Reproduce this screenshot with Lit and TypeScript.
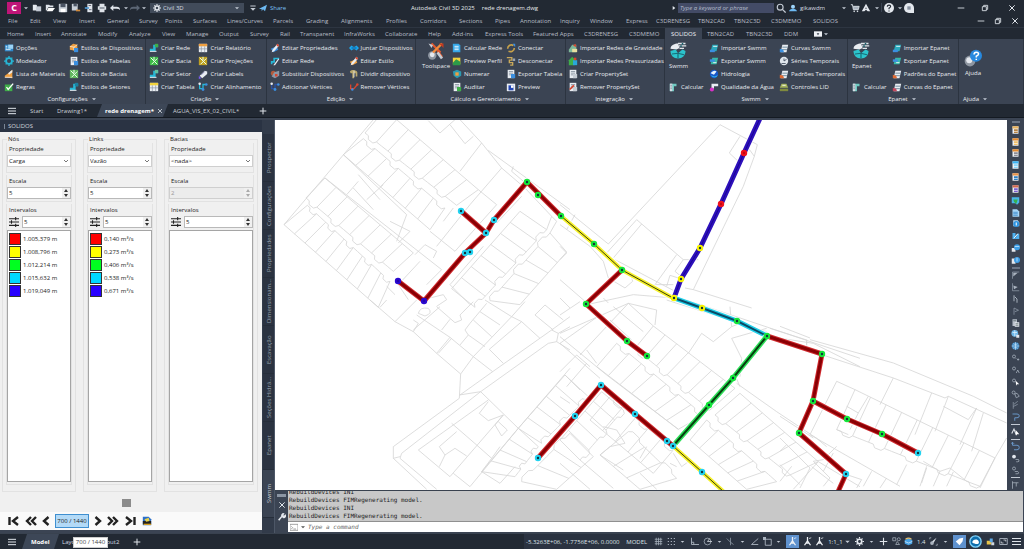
import { LitElement, html, css, svg, nothing, TemplateResult } from "lit";
import { customElement } from "lit/decorators.js";
import { classMap } from "lit/directives/class-map.js";

type Pt = [number, number];

/* ---------- icons, drawn on a 12 unit grid ---------- */
const C = { cy: "#27b7d6", or: "#f0a040", gr: "#3fae49", rd: "#d8452e", bl: "#3b8fe0", wh: "#e9edf2", ye: "#f2d33c", gy: "#9aa4b1" };

const doc = (accent: string) => svg`<path d="M2 1h8v10H2z" fill=${C.wh}/><path d="M3.5 3h5M3.5 5h5M3.5 7h5" stroke="#7b8796" stroke-width=".9"/><path d="M6 6h5v5H6z" fill=${accent}/>`;
const stack = (accent: string) => svg`<path d="M1 4l4-3 5 1v5L6 9 1 8z" fill=${C.or}/><path d="M1 4l5 1 4-3M6 5v4" stroke="#fff" stroke-width=".8" fill="none"/><path d="M6 6h5v5H6z" fill=${accent}/>`;
const pipe = (accent: string) => svg`<path d="M1 10V7h4V2h6v3H8v5z" fill=${C.cy}/><path d="M7 1h4v4H7z" fill=${accent}/><path d="M1 10h8" stroke=${C.wh} stroke-width="1.2"/>`;
const map = (accent: string) => svg`<path d="M1 1h10v10H1z" fill=${accent}/><path d="M2 2l8 8M10 3L3 10M6 1v4" stroke="#eaffea" stroke-width="1.2"/>`;
const table = (accent: string) => svg`<path d="M1 1h10v10H1z" fill=${C.wh}/><path d="M1 1h10v3H1z" fill=${accent}/><path d="M4 4v7M8 4v7M1 7h10" stroke="#8a94a2" stroke-width=".8"/>`;
const pencil = (accent: string) => svg`<path d="M1 7l3 4 6-3-2-4z" fill=${accent}/><path d="M3 8l6-7 2 2-6 7-3 1z" fill=${C.wh}/><path d="M9 1l2 2-1.500 1.500-2-2z" fill=${C.rd}/>`;
const nodes = (accent: string) => svg`<path d="M2 2v6h4V3h4" fill="none" stroke=${accent} stroke-width="1.600"/><circle cx="2" cy="2" r="1.500" fill=${C.wh}/><circle cx="10" cy="3" r="1.500" fill=${C.bl}/><circle cx="6" cy="9" r="1.700" fill=${C.bl}/>`;
const curve = (accent: string) => svg`<path d="M2 11l2-9h7L9 11z" fill=${C.wh}/><path d="M4 5h6M3.500 8h6" stroke="#5b7d92"/><path d="M1 11V7l4 1 1 3z" fill=${accent}/>`;
const swirl = svg`<path d="M1 4.500C1 2 4 1 6 1l1 3-2 1z" fill=${C.wh}/><path d="M6 1h5M6.500 2.600h5M7 4.200h3" stroke="#dfe5ea" stroke-width=".9"/><path d="M9 .6v1.200M8 2.200v1.200" stroke="#17606b"/><path d="M1 6l3.500-1L6 7.500 9 5l2 1c0 3-2 5-5 5S1 9 1 6z" fill="#2cc3cb"/><path d="M2 8l4-.5L10 8.500M6 7.500V11" stroke="#176f7a" stroke-width=".8" fill="none"/>`;

const ICON: Record<string, TemplateResult> = {
  opcoes: svg`<path d="M1 2h10v8H1z" fill="#2d86c9"/><path d="M5 2h6v5H5z" fill="#9bd3f5"/><path d="M2 4h2M2 6h2M2 8h6" stroke="#fff"/>`,
  modelador: svg`<circle cx="6" cy="6" r="3.500" fill="none" stroke=${C.cy} stroke-width="2.200"/><path d="M6 0v2M6 10v2M0 6h2M10 6h2M2 2l1 1M9 9l1 1M10 2L9 3M2 10l1-1" stroke=${C.cy} stroke-width="1.500"/>`,
  lista: svg`<path d="M1 10V8l4-3 5-4v10z" fill=${C.or}/><path d="M5 5l5-4v3L6 7z" fill=${C.wh}/><path d="M1 10h9" stroke=${C.wh}/>`,
  regras: svg`<path d="M1 3h9v8H1z" fill=${C.gr}/><path d="M3 6l2 3 6-7" stroke="#fff" stroke-width="1.600" fill="none"/>`,
  estDisp: stack(C.bl), estTab: doc(C.bl), estBac: map("#62b85f"), estSet: pipe("#1c7fa0"),
  rede: pipe(C.gr), bacia: map("#3dbb46"), setor: pipe("#63c1a0"), tabela: table(C.ye),
  relat: table(C.or), proj: map("#c0a020"), labels: svg`<path d="M2 8l6-6 3 1 0 3-6 5z" fill=${C.wh}/><path d="M1 8l3 3-3 1z" fill="#7a5cf0"/><path d="M4 7l4-4" stroke="#77a"/>`, alinh: nodes(C.cy),
  edProp: pencil(C.bl), edRede: svg`<path d="M2 10V7h3V3h6" stroke=${C.cy} stroke-width="2" fill="none"/><path d="M4 11l6-8 1 1-5 7z" fill=${C.wh}/>`,
  subst: svg`<circle cx="4" cy="5" r="3" fill="#b35a3b"/><path d="M5 4l6-2v6l-5 3-4-2z" fill="#8d97a5"/><path d="M6 6h3v3H6z" fill=${C.rd}/>`, addV: nodes("#2d4f9e"),
  juntar: svg`<path d="M0 6l3-3 2 1.500h2L9 3l3 3-3 3-2-1.500H5L3 9z" fill="#1aa7f0"/><path d="M3 6h6" stroke="#0b4f86"/>`, edEst: pencil(C.or),
  dividir: svg`<path d="M1 3c3-3 8-2 9 1v5H8V5H6v6H4V5H2z" fill="#b9a86c"/><path d="M6 2v8" stroke=${C.wh}/>`, remV: svg`<path d="M2 3v5h4l4-5" fill="none" stroke=${C.rd} stroke-width="1.600"/><circle cx="10" cy="3" r="1.500" fill=${C.rd}/><circle cx="4" cy="9" r="1.500" fill=${C.bl}/>`,
  calc: svg`<path d="M1 1h7l2 2v8H1z" fill="#35a7e8"/><path d="M3 4h5M3 6h5M3 8h5" stroke="#fff"/>`,
  perfil: svg`<path d="M1 2h9v8H1z" fill=${C.ye}/><path d="M1 8l4-4 5 3v4H1z" fill="#2d9a48"/>`,
  numerar: svg`<path d="M1 3l5-2 5 2v5l-5 3-4-3z" fill="#2b9ab2"/><path d="M4 4h4v4H4z" fill=${C.or}/>`, auditar: doc(C.gr),
  conectar: svg`<path d="M2 7c0-4 4-6 7-4M10 6c0 4-4 5-7 4" stroke="#c7a14a" stroke-width="2" fill="none"/><path d="M8 1h3v4z" fill=${C.bl}/>`,
  desc: svg`<path d="M1 2h6v3H4v3h4v3H5" stroke="#caa95a" stroke-width="1.600" fill="none"/><path d="M8 3h3v3H8z" fill=${C.gy}/>`,
  expTab: doc(C.bl), preview: svg`<path d="M1 2h10v9H1z" fill=${C.wh}/><path d="M3 4h6v6H3z" fill="#2347b5"/><path d="M6 4h3v3H6z" fill="#fff"/>`,
  impG: svg`<path d="M1 8l4-6h5v9H1z" fill="#7eb79a"/><path d="M6 3l3-2 1 4z" fill=${C.rd}/><path d="M5 7h6v4H5z" fill="#e8e0a0"/>`,
  impP: svg`<path d="M1 5l4-4 3 3v7H1z" fill="#3fae49"/><path d="M6 5h5v6H6z" fill="#29a7d9"/><path d="M7 2h3v3H7z" fill=${C.rd}/>`,
  criaP: doc("#c6ccd4"), remP: svg`${doc("#c6ccd4")}<path d="M2 9l5-5" stroke=${C.rd} stroke-width="2"/>`,
  impS: svg`<path d="M2 10l2-8h7l-2 8z" fill="#2aa9bb"/><path d="M1 8h6v3H1z" fill=${C.bl}/><path d="M5 4h5" stroke="#fff"/>`,
  expS: svg`<path d="M2 10l2-8h7l-2 8z" fill="#38b9a8"/><path d="M1 4h6v3H1z" fill=${C.bl}/><path d="M5 8h4" stroke="#fff"/>`,
  hidro: svg`<circle cx="6" cy="6" r="5" fill="#1556c8"/><path d="M2 5c2-3 5-4 7-2L6 7z" fill="#e8f4ff"/><path d="M3 8c2 2 5 2 7 0" stroke="#35d0f0" fill="none"/>`,
  qual: svg`<path d="M3 2h8v3H6v3H3z" fill=${C.wh}/><circle cx="3.500" cy="9" r="2.500" fill="#d931c8"/>`,
  calcular: svg`<path d="M1 2h8v3H6v6H1z" fill="#6fc9c1"/><path d="M1 2h3v9H1z" fill="#d7dde5"/><path d="M2 4h1M2 6h1M2 8h1" stroke="#456"/>`,
  curvas: curve(C.bl), series: svg`<circle cx="6" cy="6" r="5" fill="#dfe5ec"/><path d="M6 3v3l3-2M3 9h5" stroke="#3a4658" fill="none"/>`,
  padroes: curve("#e06a32"), lid: svg`<path d="M3 2h6l2 5H1z" fill="#a5b35a"/><path d="M1 8h10v3H1z" fill="#7f8a3e"/><path d="M4 4h4" stroke="#fff"/>`, curvasE: curve("#c2485d"),
};

/* monochrome icons for bars */
const LINE: Record<string, TemplateResult> = {
  file: svg`<path d="M1 2h4l1 1v6H1z" fill="#e4e8ee"/><path d="M5 4h6v6H5z" fill="#c3cad4"/>`,
  open: svg`<path d="M1 2h4l1 1h4v2H4L2 9H1z" fill="#dfe4ea"/><path d="M4 6h8l-3 4H2z" fill="#fff"/>`,
  save: svg`<path d="M1 1h10v10H1z" fill="#c8cfd8"/><path d="M3 1h6v4H3z" fill="#4a5464"/><path d="M3 7h6v4H3z" fill="#fff"/>`,
  saveas: svg`<path d="M1 1h7v8H1z" fill="#c8cfd8"/><path d="M3 1h4v3H3z" fill="#4a5464"/><path d="M6 9h5" stroke="#d08a3c" stroke-width="2"/>`,
  web: svg`<path d="M4 1h6v10H4z" fill="#dfe4ea"/><path d="M1 6h5" stroke="#4f9ad6" stroke-width="2"/><path d="M5.500 3h3M6 8h3" stroke="#556"/>`,
  print: svg`<path d="M3 1h6v3H3zM1 4h10v4H1zM3 8h6v3H3z" fill="#dfe4ea"/><path d="M3 6h6" stroke="#39424f"/>`,
  undo: svg`<path d="M0 6l4-4v2.500h4q4 0 4 4-1.500-1.500-4-1.500H4v2.500z" fill="#dfe4ea"/>`,
  redo: svg`<path d="M12 6L8 2v2.500H4q-4 0-4 4Q1.500 7 4 7h4v2.500z" fill="#5c6675"/>`,
  caret: svg`<path d="M3 5h6L6 8z" fill="#c3cad4"/>`,
  caretLine: svg`<path d="M2 3h8" stroke="#c3cad4" stroke-width="1.500"/><path d="M2 6h8l-4 4z" fill="#c3cad4"/>`,
  right: svg`<path d="M4 3l4 3-4 3z" fill="#e4e8ee"/>`,
  gear: svg`<circle cx="6" cy="6" r="3" fill="none" stroke="#e4e8ee" stroke-width="2.200"/><path d="M6 0v2M6 10v2M0 6h2M10 6h2M2 2l1.500 1.500M8.500 8.500L10 10M10 2L8.500 3.500M2 10l1.500-1.500" stroke="#e4e8ee" stroke-width="1.600"/>`,
  share: svg`<path d="M0 7L12 1 9 11 6 8l-2 3V8z" fill="#6db9f2"/>`,
  search: svg`<circle cx="5" cy="5" r="3.500" fill="none" stroke="#c3cad4" stroke-width="1.400"/><path d="M8 8l3.500 3.500" stroke="#c3cad4" stroke-width="1.500"/>`,
  user: svg`<circle cx="6" cy="4" r="3" fill="#9fd4fa"/><path d="M0 11q1-4 6-4t6 4z" fill="#6db9f2"/>`,
  cart: svg`<path d="M1 2h2l1 6h6l1-4H4" fill="#aab3bf" stroke="#dfe4ea"/><circle cx="5" cy="10" r="1" fill="#dfe4ea"/><circle cx="9" cy="10" r="1" fill="#dfe4ea"/>`,
  tri: svg`<path d="M6 1L1 10h3l2-2 2 2h3zM6 5l1 2H5z" fill="#e4e8ee"/>`,
  help: svg`<circle cx="6" cy="6" r="6" fill="#e4e8ee"/><path d="M4 4.500q0-2 2-2t2 1.700q0 1-2 2V7.500M6 9v1.200" stroke="#222933" stroke-width="1.300" fill="none"/>`,
  chat: svg`<path d="M6 0a6 6 0 100 12h6V6a6 6 0 00-6-6z" fill="#e4e8ee"/><path d="M4 4h4v4H4z" fill="#8791a0"/>`,
  min: svg`<path d="M1 6h10" stroke="#dfe4ea" stroke-width="1.300"/>`,
  restore: svg`<path d="M2 4h6v6H2zM4 4V2h6v6H8" fill="none" stroke="#dfe4ea" stroke-width="1.300"/>`,
  close: svg`<path d="M2 2l8 8M10 2l-8 8" stroke="#dfe4ea" stroke-width="1.500"/>`,
  burger: svg`<path d="M0 2h12M0 6h12M0 10h12" stroke="#dfe4ea" stroke-width="1.500"/>`,
  plus: svg`<path d="M6 1v10M1 6h10" stroke="#dfe4ea" stroke-width="1.500"/>`,
  media: svg`<path d="M0 2h12v8H0z" fill="#eef1f5"/><path d="M4 5h4L6 8z" fill="#333c4a"/>`,
  grid: svg`<path d="M3 1v10M6 1v10M9 1v10M1 3h10M1 6h10M1 9h10" stroke="#aab3bf"/>`,
  dots: svg`<path d="M1 2h10M1 6h10M1 10h10" stroke="#aab3bf" stroke-width="1.600" stroke-dasharray="1.600 2.400"/>`,
  ortho: svg`<path d="M2 1v9h10M5 10V7H2" stroke="#aab3bf" fill="none" stroke-width="1.200"/>`,
  polar: svg`<circle cx="6" cy="6" r="4.500" fill="none" stroke="#aab3bf"/><path d="M6 6h6M6 6l3-4" stroke="#dfe4ea"/>`,
  iso: svg`<path d="M1 2l5 5M6 1v10M6 7l4 3" stroke="#8b95a3" stroke-width="1.100"/>`,
  angle: svg`<path d="M11 2L2 10h9" fill="none" stroke="#aab3bf" stroke-width="1.200"/>`,
  osnap: svg`<path d="M3 3h8v8H3z" fill="none" stroke="#aab3bf" stroke-width="1.200"/><path d="M0 0h4v4H0z" fill="#aab3bf"/>`,
  annot: svg`<path d="M6 0v5L2 11M6 5l4 6M4 8h4" stroke="#eef1f5" stroke-width="1.700" fill="none"/><path d="M8 2l3-1" stroke="#eef1f5"/>`,
  shapes: svg`<path d="M1 1h4v4H1zM5 10l2-4 3 4z" fill="none" stroke="#aab3bf"/><circle cx="9" cy="3" r="2" fill="none" stroke="#aab3bf"/>`,
  globe: svg`<path d="M1 4l5-2 5 2v5l-5 2-5-2z" fill="#48a2e6"/><path d="M2 3q4-3 8 0" stroke="#e8c170" stroke-width="1.500" fill="none"/><path d="M1 6l5 2 5-2" stroke="#d8ecfb" fill="none"/>`,
  brush: svg`<path d="M10 1L4 6l2 2z" fill="#dfe4ea"/><circle cx="4" cy="8" r="2.500" fill="#aab3bf"/><path d="M1 3V1h2M9 11h2V9" stroke="#aab3bf" fill="none"/>`,
  tag: svg`<path d="M1 6l5-4 5-1-1 5-4 5z" fill="#fff"/>`,
  ring: svg`<circle cx="6" cy="6" r="5.200" fill="#0f6fae" stroke="#7fd0f8" stroke-width="1.300"/><path d="M3 7c0-3 5-4 6-1s-3 3-6 1z" fill="#fff"/>`,
  people: svg`<path d="M1 5h6v5H1z" fill="#e8c44a"/><path d="M5 2h4v5H5z" fill="#5fa8e6"/><path d="M7 7h4v4H7z" fill="#cfd6df"/>`,
  full: svg`<path d="M1 2h10v8H1z" fill="none" stroke="#aab3bf" stroke-width="1.200"/><path d="M6 4h3v2M3 6v2h3" stroke="#dfe4ea" fill="none"/>`,
  wrench: svg`<path d="M1 11l5-6" stroke="#e4e8ee" stroke-width="2.200"/><path d="M6 6a3 3 0 014-5L8 3l1 1 2-2a3 3 0 01-4 5z" fill="#e4e8ee"/>`,
};

/* icons of the docked toolbar on the right */
const color = (a: string, b: string) => svg`<path d="M2 1h8v10H2z" fill=${C.wh}/><path d="M2 1h8v3H2z" fill=${a}/><path d="M4 5h5v5H4z" fill=${b}/><path d="M3 8h6" stroke="#fff" stroke-width=".8"/>`;
const DOCK: (TemplateResult | "grip" | "sep")[] = [
  "grip",
  color("#e9b25c", "#b78342"), color("#e58b2f", "#f2c067"), color("#e58b2f", "#8c8c96"), color("#3bb2f2", "#86d4fa"),
  color("#e9944a", "#2b7fc4"), color("#d1674e", "#7d5fd0"),
  svg`<path d="M1 1h10v7l-3 3-2-2H1z" fill="#49b7e8"/><path d="M3 4h6l-2 6-3-3z" fill="#37b24d"/>`,
  svg`<path d="M2 1h6l3 3v7H2z" fill="#a9d7f7"/><path d="M3 5h6M3 7h6M3 9h6" stroke="#2b7fc4"/>`,
  svg`<path d="M3 1h6l2 3v5H3z" fill="#bfe1f9"/><circle cx="7" cy="6" r="4" fill="#2e94e0"/><path d="M7 4v4" stroke="#fff" stroke-width="1.400"/>`,
  svg`<path d="M2 2h4v8H2zM8 3h3v7H6z" fill="#4fb1f0"/><path d="M4 9l5-6" stroke="#fff" stroke-width="1.300"/>`,
  svg`<path d="M1 6h5v5H1z" fill="#e4e8ee"/><circle cx="8" cy="5" r="4" fill="#3f9fe6"/><path d="M5 4l6 0" stroke="#cdeaff"/>`,
  svg`<path d="M1 4h5v7H1z" fill="#e4e8ee"/><circle cx="8" cy="6" r="4" fill="#3f9fe6"/><path d="M8 3v5" stroke="#cdeaff"/>`,
  "grip",
  svg`<path d="M2 11V2h9" stroke="#8f99a8" fill="none"/><path d="M3 3h6L3 8z" fill="#aab3bf"/>`,
  svg`<path d="M2 1v10h9" stroke="#8f99a8" fill="none"/><path d="M3 4l6 2-5 3z" fill="#aab3bf"/>`,
  svg`<path d="M4 1v8M5 3l3 3v5" stroke="#aab3bf" fill="none" stroke-width="1.300"/>`,
  svg`<path d="M4 11V2l6 3-5 2" stroke="#8f99a8" fill="none"/>`,
  svg`<path d="M2 1h6v9H2z" fill="#b9c0ca"/><path d="M5 5h6v6H5z" fill="#e4e8ee"/><path d="M3 3h4M6 7h4M6 9h4" stroke="#566"/>`,
  svg`<circle cx="5" cy="5" r="4.500" fill="#6fb9ea"/><path d="M2 4h6M5 1v8" stroke="#e2f3ff"/><path d="M7 7h4v4H7z" fill="#e4e8ee"/>`,
  svg`<circle cx="6" cy="6" r="5" fill="#3d86c0"/><path d="M1 6h10M6 1v10M3 3q3 2 6 0M3 9q3-2 6 0" stroke="#bfe1f9" fill="none"/>`,
  svg`<circle cx="4" cy="4" r="2" fill="none" stroke="#aab3bf"/><path d="M6 6l1 1M8 8h3M9.500 6.500v3" stroke="#aab3bf"/>`,
  svg`<circle cx="4" cy="4" r="2" fill="none" stroke="#aab3bf"/><path d="M7 10l2-4 2 4" stroke="#aab3bf" fill="none"/>`,
  svg`<circle cx="4" cy="4" r="2" fill="none" stroke="#aab3bf"/><path d="M6 4l5 5H8l-1 2z" fill="#fff"/>`,
  svg`<circle cx="3.500" cy="4" r="2" fill="none" stroke="#aab3bf"/><path d="M5 6l3-1 3 4-4 2z" stroke="#aab3bf" fill="none"/>`,
  svg`<path d="M3 2v9M3 8l6-3M4 5l5-4" stroke="#8f99a8" fill="none"/>`,
  svg`<path d="M2 2h6q3 0 3 2.500T8 7H5v4" stroke="#6a97c9" fill="none" stroke-width="1.300"/>`,
  "sep",
  svg`<path d="M1 8l3-6 3 8" stroke="#e4e8ee" fill="none" stroke-width="1.400"/><path d="M6 3l5 6H8l-1 2z" fill="#fff"/>`,
  "sep",
  svg`<path d="M2 1v4h6q3 0 3 3t-3 3H4M0 3l2-2 2 2" stroke="#6a97c9" fill="none" stroke-width="1.300"/>`,
  svg`<circle cx="4" cy="4" r="2.500" fill="#e4e8ee"/><path d="M6 8h4q2 3-1 3H7" stroke="#aab3bf" fill="none"/>`,
  svg`<circle cx="4" cy="4" r="2" fill="none" stroke="#aab3bf"/><path d="M5 8h4q3 3-1 3H6" stroke="#aab3bf" fill="none"/>`,
  "sep",
  svg`<path d="M2 1v10M2 3h8M7 3v5" stroke="#aab3bf" fill="none"/>`,
];

const pic = (body: TemplateResult, cls = "ic") => html`<svg class=${cls} viewBox="0 0 12 12" aria-hidden="true">${body}</svg>`;

/* ---------- drawing: parcels ---------- */
const lerp = (a: Pt, b: Pt, t: number): Pt => [a[0] + (b[0] - a[0]) * t, a[1] + (b[1] - a[1]) * t];
const seg = (a: Pt, b: Pt) => `M${a[0].toFixed(1)} ${a[1].toFixed(1)}L${b[0].toFixed(1)} ${b[1].toFixed(1)}`;

/** Kerb line with a small step at every second parcel. */
function kerb(a: Pt, b: Pt, n: number): string {
  const len = Math.hypot(b[0] - a[0], b[1] - a[1]);
  const nx = -(b[1] - a[1]) / len, ny = (b[0] - a[0]) / len;
  let d = `M${a[0]} ${a[1]}`;
  for (let i = 0; i < n; i++) {
    const off = i % 2 ? 0 : 9;
    for (const t of [0.3, 0.45, 0.85, 1]) {
      const p = lerp(a, b, (i + t) / n);
      const o = t === 0.45 || t === 0.85 ? off : 0;
      d += `L${(p[0] + nx * o).toFixed(1)} ${(p[1] + ny * o).toFixed(1)}`;
    }
  }
  return d;
}

/** Row of parcels between a straight back line and a stepped kerb. */
function row(v: number[]): string {
  const [ax, ay, bx, by, cx, cy, dx, dy, n] = v;
  const a: Pt = [ax, ay], b: Pt = [bx, by], c: Pt = [cx, cy], d: Pt = [dx, dy];
  let out = seg(a, b) + kerb(c, d, n);
  for (let i = 0; i <= n; i++) out += seg(lerp(a, b, i / n), lerp(c, d, i / n));
  return out;
}

interface Sheet { at: Pt; rows: number[][]; lines: string[] }
const SHEETS: Sheet[] = [
  { at: [270, 118],
    rows: [
      [42, 320, 325, 568, 112, 262, 360, 490, 9], [165, 180, 430, 405, 108, 240, 370, 460, 8],
      [220, 110, 480, 335, 280, 62, 525, 270, 7], [345, -25, 625, 215, 285, 45, 560, 262, 8],
      [750, 280, 545, 512, 830, 335, 615, 568, 7], [890, 402, 750, 560, 840, 345, 660, 548, 5],
    ],
    lines: [
      "M42 320L310 5M165 180L515 455M220 110L410 290L380 370M265 170L330 245M250 210L310 275M290 245L340 200M230 230L265 190",
      "M475 8L510 45L555 5M540 20L585 77L610 55M570 5L635 75L570 160M635 75L695 150L765 210L845 295M655 97L900 275M695 150L600 260L500 385",
      "M625 215L680 260L555 400L480 340M730 145L725 160L790 215M755 235L680 315M360 310L420 340L385 375M435 410L465 380L500 400L490 420M515 455L470 500M450 430L385 500L415 545M550 270L520 310M350 505L375 530",
      "M480 540L520 530L530 545L500 565M640 385L540 500L600 560M830 335L845 295L860 310L840 345",
    ] },
  { at: [560, 118],
    rows: [],
    lines: [
      "M0 260L145 378L480 20L592 80L583 115L550 205L400 515M540 55L508 105L540 135M565 90L583 115M140 405L230 305L370 425L385 425M245 318L160 420M350 410L285 500M370 425L345 460L375 485",
      "M375 510L400 515L575 570M0 320L90 385L130 430L145 480L195 510L218 490L210 460M0 385L20 405L0 425M0 485L75 550M80 560L220 530L340 540M320 505L330 472L355 480M20 335L45 290M385 425L415 425M340 500L280 500M130 540L145 555M0 540L30 570M165 425L345 520",
    ] },
  { at: [270, 300],
    rows: [
      [885, 225, 745, 385, 955, 290, 815, 430, 5], [745, 385, 635, 515, 805, 440, 735, 530, 4], [970, 470, 860, 568, 900, 400, 755, 545, 3],
    ],
    lines: [
      "M300 0L375 65L430 95L500 160L572 222L568 295L370 440L370 475L470 568M330 22L350 0M375 65L440 0M430 95L445 70L430 60M445 40Q450 20 475 25Q490 40 465 48L445 40M430 90L510 20",
      "M440 45L540 112L500 160M545 115L505 160M540 112L610 170L572 222M610 170L668 215M610 170L725 50L765 5M515 90L540 58M500 20L555 68L575 60L570 45L610 5M570 135L595 105L585 90L600 70L650 10",
      "M595 105L645 140M610 60L665 110M630 35L690 75M645 0L725 50L755 65L658 148L700 190M755 65L810 115M570 285L668 215L845 90L900 50M568 285L632 275L835 130L860 125L900 150M845 90L865 100L860 125M865 100L900 80",
      "M632 275L745 385L900 205M745 385L600 560M795 45L825 15L880 60M795 45L850 90M632 275L395 460L390 475L500 568M370 475L390 470M655 300L445 450L540 530L700 345M545 370L620 435L665 475L635 515",
      "M655 305L628 340L655 362L700 345L675 375L695 408L712 390L685 365M560 395L508 440L525 465L508 500M525 465L555 445L590 468M550 520L600 560M635 515L690 550L735 500M690 440L665 475",
    ] },
  { at: [560, 300],
    rows: [
      [280, 78, 525, 265, 225, 145, 450, 330, 7], [110, 200, 355, 388, 170, 130, 430, 345, 7],
      [540, 280, 775, 485, 465, 345, 690, 525, 7], [390, 420, 560, 568, 440, 360, 650, 545, 6],
      [0, 420, 125, 275, 60, 480, 190, 330, 5],
      [90, 360, 280, 520, 150, 290, 340, 450, 5], [240, 568, 120, 465, 350, 535, 205, 395, 3],
    ],
    lines: [
      "M0 45L60 5M0 100L205 10L290 30L285 75M205 10L60 165M205 10L280 78M120 45L0 130M0 110L140 225L355 388M0 130L120 235M50 165L0 215M80 190L20 260M50 165L90 200M15 225L60 270M0 290L30 310",
      "M385 160L425 100L460 125L515 80L510 20M515 80L540 70M620 85L515 115L545 175L540 230M320 0L620 95M380 0L900 175M740 120L740 135M630 85L740 120M630 110L760 130L900 200M530 250L650 335L770 415L800 440M525 225L540 260",
      "M130 380L170 390L195 430L150 440L120 465L190 510M160 20L250 95M150 60L215 120M80 150L110 190M340 460L365 500L385 485M240 520L290 568M260 440L240 475M330 490L350 500M0 490L90 568M60 480L160 565M700 568L775 485L900 560M755 500L820 550",
    ] },
  { at: [780, 118],
    rows: [[225, 815, 645, 1020, 170, 935, 600, 1105, 9]],
    lines: [
      "M90 665L340 735L580 835L680 885M125 710L340 780L495 840L505 835L680 915M340 780L300 860M170 790L90 950L360 1105M170 790L225 815M590 870L540 980M610 885L575 1000M490 865L565 905L590 870M455 825L405 950M505 835L465 940",
      "M0 895L100 960M0 625L90 660M80 665L80 685M200 865L235 885L265 835M170 935L205 950M235 885L210 935M680 960L645 1020L600 1110M430 1030L480 1060L510 1050L560 1090L600 1105M440 1050L425 1095M480 1060L460 1105M520 1062L500 1105M420 1105L440 1045",
      "M100 1030L130 1025L170 985M0 960L90 1050L60 1110M100 1030L150 1080L130 1105M35 1045L0 1090M20 980L0 1000M200 1070L245 1085L230 1110M160 1005L130 1060M275 1060L250 1105M320 1080L300 1110M0 1040L60 1100M380 1040L350 1100",
    ] },
];

/* ---------- drawing: pipe network ---------- */
const LINKS: [string, string][] = [
  ["red", "M398 281L424 301L466 252L486 233L494 220L527 182L561 216"], ["red", "M461 211L486 233"],
  ["yellow", "M561 216L594 244L622 270L673 298"], ["red", "M622 270L586 304L627 341L647 356"],
  ["blue", "M762 114L744 153L721 204L700 248L681 279L674 298"], ["cyan", "M674 298L702 308L737 321L767 336"],
  ["red", "M767 336L822 354L813 401L799 433L846 474L837 494"], ["red", "M813 401L847 419L882 434L918 453"],
  ["green", "M767 336L733 378L709 405L673 446"], ["red", "M538 458L575 416L601 385L635 414L673 446"], ["yellow", "M673 446L702 472L724 492"],
];
const NODES: [string, Pt[]][] = [
  ["blue", [[398, 281], [424, 301]]],
  ["cyan", [[465, 253], [470, 252], [486, 233], [461, 211], [494, 220], [918, 453], [846, 474], [673, 446], [667, 441], [635, 414], [601, 385], [575, 416], [538, 458], [702, 472]]],
  ["green", [[527, 182], [538, 195], [561, 216], [594, 244], [622, 270], [586, 304], [627, 341], [647, 356], [737, 321], [767, 336], [822, 354], [813, 401], [847, 419], [882, 434], [799, 433], [733, 378], [709, 405]]],
  ["yellow", [[674, 298], [681, 279], [700, 248], [702, 308]]],
  ["red", [[721, 204], [744, 153]]],
];

/* ---------- ribbon data ---------- */
type Cmd = [string, string];
interface Panel { title: string; cls: string; big?: [string, string]; sub?: Cmd; cols: Cmd[][] }
const PANELS: Panel[] = [
  { title: "Configurações", cls: "p-config", cols: [
    [["opcoes", "Opções"], ["modelador", "Modelador"], ["lista", "Lista de Materiais"], ["regras", "Regras"]],
    [["estDisp", "Estilos de Dispositivos"], ["estTab", "Estilos de Tabelas"], ["estBac", "Estilos de Bacias"], ["estSet", "Estilos de Setores"]]] },
  { title: "Criação", cls: "p-create", cols: [
    [["rede", "Criar Rede"], ["bacia", "Criar Bacia"], ["setor", "Criar Setor"], ["tabela", "Criar Tabela"]],
    [["relat", "Criar Relatório"], ["proj", "Criar Projeções"], ["labels", "Criar Labels"], ["alinh", "Criar Alinhamento"]]] },
  { title: "Edição", cls: "p-edit", cols: [
    [["edProp", "Editar Propriedades"], ["edRede", "Editar Rede"], ["subst", "Substituir Dispositivos"], ["addV", "Adicionar Vértices"]],
    [["juntar", "Juntar Dispositivos"], ["edEst", "Editar Estilo"], ["dividir", "Dividir dispositivo"], ["remV", "Remover Vértices"]]] },
  { title: "Cálculo e Gerenciamento", cls: "p-calc", big: ["tools", "Toolspace"], cols: [
    [["calc", "Calcular Rede"], ["perfil", "Preview Perfil"], ["numerar", "Numerar"], ["auditar", "Auditar"]],
    [["conectar", "Conectar"], ["desc", "Desconectar"], ["expTab", "Exportar Tabela"], ["preview", "Preview"]]] },
  { title: "Integração", cls: "p-integ", cols: [
    [["impG", "Importar Redes de Gravidade"], ["impP", "Importar Redes Pressurizadas"], ["criaP", "Criar PropertySet"], ["remP", "Remover PropertySet"]]] },
  { title: "Swmm", cls: "p-swmm", big: ["swirl", "Swmm"], sub: ["calcular", "Calcular"], cols: [
    [["impS", "Importar Swmm"], ["expS", "Exportar Swmm"], ["hidro", "Hidrologia"], ["qual", "Qualidade da Água"]],
    [["curvas", "Curvas Swmm"], ["series", "Séries Temporais"], ["padroes", "Padrões Temporais"], ["lid", "Controles LID"]]] },
  { title: "Epanet", cls: "p-epanet", big: ["swirl", "Epanet"], sub: ["calcular", "Calcular"], cols: [
    [["impS", "Importar Epanet"], ["expS", "Exportar Epanet"], ["padroes", "Padrões do Epanet"], ["curvasE", "Curvas do Epanet"]]] },
  { title: "Ajuda", cls: "p-help", big: ["ajuda", "Ajuda"], cols: [] },
];
const BIG: Record<string, TemplateResult> = {
  swirl,
  tools: svg`<circle cx="3.500" cy="9" r="2.800" fill="#8e96a1"/><circle cx="3.500" cy="8.500" r="1.600" fill="#e4e8ee"/><path d="M3 1l6 6M10 10L7 6" stroke="#e2572e" stroke-width="1.500"/><path d="M10 1L4 7" stroke="#f08a3c" stroke-width="1.600"/><path d="M8 1h3v3z" fill="#c23a20"/><path d="M1 1l3 1-1 2z" fill="#c6ccd4"/><path d="M7 7l3 4" stroke="#c6ccd4" stroke-width="1.800"/>`,
  ajuda: svg`<circle cx="4" cy="8" r="3.600" fill="#8e96a1"/><circle cx="3.500" cy="7.500" r="2" fill="#e4e8ee"/><circle cx="8" cy="4.500" r="4" fill="#2789df"/><path d="M6.700 3.600q0-1.500 1.500-1.500t1.500 1.200q0 .8-1.500 1.500v.9M8.200 6.500v.9" stroke="#fff" fill="none"/>`,
};

const MENU = ["File", "Edit", "View", "Insert", "General", "Survey", "Points", "Surfaces", "Lines/Curves", "Parcels", "Grading", "Alignments", "Profiles", "Corridors", "Sections", "Pipes", "Annotation", "Inquiry", "Window", "Express", "C3DRENESG", "TBN2CAD", "TBN2C3D", "C3DMEMO", "SOLIDOS"];
const TABS = ["Home", "Insert", "Annotate", "Modify", "Analyze", "View", "Manage", "Output", "Survey", "Rail", "Transparent", "InfraWorks", "Collaborate", "Help", "Add-ins", "Express Tools", "Featured Apps", "C3DRENESG", "C3DMEMO", "SOLIDOS", "TBN2CAD", "TBN2C3D", "DDM"];
const SIDE = ["Prospector", "Configurações", "Propriedades", "Dimensionam...", "Escavação", "Seções Hidrá...", "Epanet", "Swmm"];
const GROUPS = [
  { id: "nos", name: "Nós", prop: "Carga", scale: "5", off: false, values: ["1.005,379 m", "1.008,796 m", "1.012,214 m", "1.015,632 m", "1.019,049 m"] },
  { id: "links", name: "Links", prop: "Vazão", scale: "5", off: false, values: ["0,140 m³/s", "0,273 m³/s", "0,406 m³/s", "0,538 m³/s", "0,671 m³/s"] },
  { id: "bacias", name: "Bacias", prop: "<nada>", scale: "2", off: true, values: [] as string[] },
];
const SCALE = ["red", "yellow", "green", "cyan", "blue"];

@customElement("network-map")
class NetworkMap extends LitElement {
  static styles = css`
    :host { display: block; min-width: 0; min-height: 0; overflow: hidden; background: #fff; }
    svg { display: block; width: 100%; height: 100%; }
    .parcel { fill: none; stroke: #d6d6d6; stroke-width: 2.5; stroke-linejoin: round; }
    .halo, .core { fill: none; stroke-linejoin: round; }
    .halo { stroke-width: 5; } .core { stroke-width: 1; }
    .halo.red { stroke: #d02a2e; } .core.red { stroke: #8a0004; stroke-width: 3; }
    .halo.yellow { stroke: #f4f02a; stroke-width: 4; } .core.yellow { stroke: #3c3c08; }
    .halo.green { stroke: #2fe05a; } .core.green { stroke: #06400f; stroke-width: 2; }
    .halo.cyan { stroke: #20d0ea; } .core.cyan { stroke: #0a4a66; stroke-width: 2; }
    .halo.blue { stroke: #2d10bb; } .core.blue { stroke: #1a0494; }
    .edge { fill: none; stroke: #fff; stroke-width: 7; opacity: 0.7; }
    circle.red { fill: #f0101c; } circle.yellow { fill: #f8f400; } circle.green { fill: #14e83a; }
    circle.cyan { fill: #22d2f0; } circle.blue { fill: #2a08d0; }
    circle.dot { fill: #12323a; } circle.dot.blue { fill: #2404a8; } circle.dot.red { fill: #c00812; }
  `;
  render() {
    return html`<svg viewBox="275 120 732 370" preserveAspectRatio="xMinYMin slice" role="img" aria-label="rede drenagem">
      ${SHEETS.map((s) => svg`<g transform="translate(${s.at[0]} ${s.at[1]}) scale(0.3333)"><path class="parcel" d=${s.rows.map(row).join("") + s.lines.join("")}/></g>`)}
      ${LINKS.map(([c, d]) => svg`<path class="edge" d=${d}/><path class="halo ${c}" d=${d}/><path class="core ${c}" d=${d}/>`)}
      ${NODES.map(([c, ps]) => ps.map((p) => svg`<circle class=${c} cx=${p[0]} cy=${p[1]} r="3.200"/><circle class="dot ${c}" cx=${p[0]} cy=${p[1]} r="1.200"/>`))}
    </svg>`;
  }
}

@customElement("app-root")
class AppRoot extends LitElement {
  static styles = css`
    :host { display: block; height: 100vh; overflow: hidden; font: 6px/8px "Open Sans", "Noto Sans", sans-serif; color: #d6dae0; background: #222933; }
    * { box-sizing: border-box; }
    button, input, select { font: inherit; color: inherit; margin: 0; padding: 0; border: 0; background: none; border-radius: 0; min-width: 0; }
    button { display: flex; align-items: center; white-space: nowrap; text-align: left; }
    input { outline: 0; }
    svg { display: block; flex: none; }
    .ic { width: 10px; height: 10px; }
    .sm { width: 8px; height: 8px; }
    .app { height: 100%; display: grid; grid-template-rows: 15px 12px 12px auto 14px minmax(0, 1fr) 16px; }

    .title { display: grid; grid-template-columns: 411fr 259fr 354fr; align-items: center; }
    .quick, .account { display: flex; align-items: center; }
    .quick { padding-left: 7px; }
    .logo { width: 14px; height: 12px; justify-content: center; background: #bf1578; color: #fff; font-weight: 700; font-size: 9px; }
    .slot { width: 13px; justify-content: center; }
    .slot.narrow { width: 9px; }
    .space { width: 94px; height: 10px; margin: 0 2px; padding: 0 3px; display: flex; align-items: center; gap: 2px; background: #414b5a; }
    .space select { flex: 1; appearance: none; }
    .share { gap: 3px; color: #7cc0f3; }
    .name { display: flex; gap: 7px; color: #e6e9ed; }
    .find { width: 96px; height: 10px; padding-left: 2px; background: #434b66; font-style: italic; }
    .find::placeholder { color: #b4bbc9; opacity: 1; }
    .account { padding-right: 6px; }
    .account .user { gap: 3px; width: 48px; margin-left: 2px; }
    .push { margin-left: auto; }
    .wide { width: 24px; }
    .bar { width: 1px; height: 9px; background: #3b4453; }

    .menu, .tabs { display: grid; align-items: center; white-space: nowrap; color: #b7bdc7; }
    .menu { padding-left: 8px; grid-template-columns: 22fr 23fr 26fr 28fr 32fr 26fr 28fr 34fr 46fr 33fr 35fr 45fr 34fr 39fr 36fr 25fr 40fr 30fr 36fr 30fr 42fr 36fr 37fr 42fr 211fr; }
    .menu > *, .tabs > * { min-width: 0; }
    .menu button { overflow: visible; }
    .last { display: flex; justify-content: space-between; }
    .doc { display: flex; padding-right: 1px; }
    .doc button { width: 17px; justify-content: center; }
    .tabs { padding-left: 7px; grid-template-columns: 28fr 26fr 37fr 31fr 33fr 24fr 33fr 31fr 30fr 20fr 44fr 41fr 43fr 24fr 33fr 48fr 51fr 45fr 36fr 42fr 39fr 38fr 30fr 210fr; border-top: 1px solid #2d3541; }
    .tabs button { height: 100%; overflow: visible; }
    .tabs .on { width: 37px; padding-left: 6px; background: #3b4453; color: #f0f2f5; }

    .ribbon { display: grid; grid-template-columns: 146fr 121fr 149fr 150fr 99fr 183fr 111fr 65fr; background: #3b4453; color: #e8ebef; }
    .panel { display: flex; flex-direction: column; min-width: 0; padding-top: 2px; border-right: 1px solid #2c3440; }
    .body { display: grid; flex: 1; padding-left: 4px; }
    .p-config .body { grid-template-columns: 65fr 76fr; }
    .p-create .body { grid-template-columns: 49fr 67fr; padding-left: 3px; }
    .p-edit .body { grid-template-columns: 78fr 66fr; padding-left: 3px; }
    .p-calc .body { grid-template-columns: 32fr 54fr 59fr; }
    .p-integ .body { padding-left: 2px; }
    .p-swmm .body { grid-template-columns: 40fr 70fr 68fr; }
    .p-epanet .body { grid-template-columns: 40fr 67fr; }
    .col { display: flex; flex-direction: column; min-width: 0; }
    .cmd { height: 13px; gap: 2px; }
    .big { height: 39px; flex-direction: column; align-items: flex-start; justify-content: flex-start; padding-top: 1px; gap: 2px; }
    .p-calc .big { align-items: center; }
    .p-help .big { padding-top: 8px; height: 52px; width: 20px; align-items: center; }
    .bigic { width: 18px; height: 18px; }
    .cap { height: 11px; justify-content: center; gap: 2px; }
    .p-help .cap { justify-content: flex-start; padding-left: 4px; }

    .files { display: flex; align-items: center; border-bottom: 1px solid #141a22; color: #ccd1d8; }
    .files .menu-btn { width: 30px; padding-left: 8px; }
    .files .f-start { width: 27px; } .files .f-draw { width: 40px; }
    .files .on { height: 100%; width: 71px; padding-left: 8px; gap: 3px; background: #3d4757; color: #fff; font-weight: 700; clip-path: polygon(5px 0, 100% 0, calc(100% - 5px) 100%, 0 100%); }
    .files .on .sm { width: 6px; height: 6px; }
    .files .f-agua { width: 91px; padding-left: 5px; }

    .main { display: grid; grid-template-columns: 262px 13px minmax(0, 1fr); background: #3b4453; padding-top: 2px; min-height: 0; }
    .palette { display: flex; flex-direction: column; min-height: 0; background: #f0f0f0; color: #222; margin-bottom: 3px; }
    .ptitle { height: 12px; flex: none; padding-left: 4px; display: flex; align-items: center; gap: 3px; background: #2a3343; color: #d3d8df; }
    .ptitle::before { content: ""; width: 1px; height: 5px; background: #7b8696; }
    .groups { flex: 1; min-height: 0; display: grid; grid-template-columns: 74fr 74fr 94fr; column-gap: 7px; padding: 3px 4px 2px 2px; }
    fieldset { margin: 0; padding: 0 3px; border: 1px solid #e2e2e2; min-width: 0; display: flex; flex-direction: column; }
    legend { padding: 0 1px; margin-left: 1px; }
    .sub { border: 1px solid #e2e2e2; border-top: 0; margin-bottom: 2px; padding: 0 0 2px; }
    .sub label { display: block; padding-left: 2px; height: 12px; line-height: 12px; }
    .sub.prop { padding-bottom: 5px; }
    .sub.grow { flex: 1; min-height: 0; display: flex; flex-direction: column; margin-bottom: 6px; }
    .pick { display: grid; height: 12px; background: #fff; border: 1px solid #cfcfcf; }
    .pick > * { grid-area: 1 / 1; }
    .pick select { appearance: none; padding-left: 1px; }
    .pick svg { justify-self: end; align-self: center; width: 6px; height: 6px; margin-right: 1px; pointer-events: none; }
    .spin { display: flex; flex: 1; min-width: 0; height: 12px; background: #fff; border: 1px solid #b9b9b9; }
    .spin.off { background: #ececec; color: #999; border-color: #cfcfcf; }
    .spin input { flex: 1; width: 0; padding-left: 1px; }
    .ud { display: grid; grid-template-rows: 5px 5px; width: 8px; background: #f0f0f0; }
    .ud button { justify-content: center; }
    .ud svg { width: 4px; height: 3px; }
    .line { display: flex; gap: 3px; padding-left: 2px; align-items: center; }
    .list { flex: 1; min-height: 0; margin: 2px 0 0; padding: 1px; list-style: none; background: #fff; border: 1px solid #a5a5a5; }
    .list li { display: flex; align-items: center; gap: 2px; height: 13px; white-space: nowrap; color: #222; padding-top: 1px; }
    .chip { width: 12px; height: 12px; border: 1px solid #333; }
    .chip.red { background: #ff0000; } .chip.yellow { background: #ffff00; } .chip.green { background: #00ff20; }
    .chip.cyan { background: #00d8ff; } .chip.blue { background: #2800ff; }
    .time { appearance: none; display: block; width: 244px; max-width: 100%; height: 18px; flex: none; margin: 0 auto 0 4px; background: transparent; }
    .time::-webkit-slider-thumb { appearance: none; width: 9px; height: 8px; background: #8b8b8b; }
    .play { height: 18px; flex: none; display: flex; align-items: center; gap: 5px; padding-left: 8px; background: #fafafa; }
    .play svg { height: 10px; width: 12px; }
    .play .one svg { width: 8px; }
    .frame { width: 34px; height: 14px; text-align: center; background: #b3daf7; border: 1px solid #3f8fd0; }

    .side { display: flex; flex-direction: column; align-items: center; padding-top: 14px; background: #323b4a; border-right: 1px solid #4d5767; color: #97a1af; }
    .side button { height: 48px; width: 11px; justify-content: center; writing-mode: vertical-rl; transform: rotate(180deg); border-top: 1px solid #262e3a; background: #2b3341; }
    .side .on { background: #3b4453; color: #c8ced6; }

    .work { display: grid; grid-template-rows: minmax(0, 1fr) 43px; min-width: 0; min-height: 0; }
    .view { display: grid; grid-template-columns: minmax(0, 1fr) 17px; min-height: 0; }
    .dock { display: flex; flex-direction: column; align-items: center; justify-content: space-between; min-height: 0; padding-top: 1px; }
    .dock .grip { width: 8px; height: 2px; background: #6b7585; }
    .dock .sep { width: 9px; height: 1px; background: #c3cad4; }
    .dock .ic { width: 9px; height: 10px; }
    .cmdl { display: grid; grid-template-columns: 13px minmax(0, 1fr); margin-right: 1px; border-top: 1px solid #39424f; }
    .tools { display: flex; flex-direction: column; align-items: center; gap: 4px; padding-top: 3px; }
    .tools .grip { width: 9px; height: 3px; background: #8b95a3; }
    .log { display: flex; flex-direction: column; font: 6px/8px "DejaVu Sans Mono", "Liberation Mono", monospace; color: #222; min-height: 0; }
    .hist { height: 30px; display: flex; flex-direction: column; justify-content: flex-end; overflow: hidden; background: #c8c8c8; padding: 0 1px 1px; }
    .hist p { margin: 0; flex: none; white-space: pre; }
    .prompt { flex: 1; display: flex; align-items: center; gap: 1px; padding-left: 2px; background: #fff; border-top: 1px solid #909090; margin-bottom: 1px; }
    .prompt input { flex: 1; font-style: italic; }
    .prompt input::placeholder { color: #666; opacity: 1; }

    .status { display: grid; grid-template-columns: 524fr 500fr; align-items: stretch; background: #222933; border-top: 1px solid #39424f; }
    .left { position: relative; display: flex; align-items: center; }
    .left .menu-btn { width: 22px; padding-left: 8px; }
    .left .on { height: 100%; width: 37px; padding-left: 9px; background: #3d4757; color: #fff; font-weight: 700; clip-path: polygon(5px 0, 100% 0, calc(100% - 5px) 100%, 0 100%); }
    .left .lay { width: 34px; padding-left: 3px; }
    .left .lay2 { width: 40px; padding-left: 4px; }
    .tip { position: absolute; left: 73px; top: 3px; width: 35px; height: 11px; background: #fff; color: #444; text-align: center; line-height: 9px; border: 1px solid #ccc; }
    .right { display: flex; align-items: center; justify-content: space-between; padding: 0 3px 0 2px; background: #2b3341; white-space: nowrap; color: #dfe3e8; }
    .right .model { padding: 0 3px; }
    .right .sm { width: 9px; height: 9px; }
    .right .c .sm { width: 7px; }
    .right .lit { width: 13px; height: 13px; justify-content: center; background: #5f92cf; }
    .right .ring .sm { width: 13px; height: 13px; }
  `;

  private b(name: string, label: string, cls = "slot") {
    return html`<button class=${cls} aria-label=${label}>${pic(LINE[name], name.startsWith("caret") || name === "right" ? "sm" : "ic")}</button>`;
  }

  private panel(p: Panel) {
    return html`<section class="panel ${p.cls}">
      <div class="body">
        ${p.big ? html`<div class="col"><button class="big">${pic(BIG[p.big[0]], "bigic")}<span>${p.big[1]}</span></button>
          ${p.sub ? html`<button class="cmd">${pic(ICON[p.sub[0]])}<span>${p.sub[1]}</span></button>` : nothing}</div>` : nothing}
        ${p.cols.map((c) => html`<div class="col">${c.map(([i, t]) => html`<button class="cmd">${pic(ICON[i])}<span>${t}</span></button>`)}</div>`)}
      </div>
      <button class="cap"><span>${p.title}</span>${pic(LINE.caret, "sm")}</button>
    </section>`;
  }

  private spinner(id: string, value: string, off: boolean) {
    const ink = off ? "#aaa" : "#333";
    return html`<span class=${classMap({ spin: true, off })}><input id=${id} .value=${value} ?disabled=${off} />
      <span class="ud"><button aria-label="Aumentar"><svg viewBox="0 0 4 3"><path d="M0 3l2-3 2 3z" fill=${ink} /></svg></button><button aria-label="Diminuir"><svg viewBox="0 0 4 3"><path d="M0 0l2 3 2-3z" fill=${ink} /></svg></button></span></span>`;
  }

  private group(g: (typeof GROUPS)[number]) {
    return html`<fieldset><legend>${g.name}</legend>
      <div class="sub prop"><label for="${g.id}-p">Propriedade</label>
        <span class="pick"><select id="${g.id}-p"><option>${g.prop}</option></select><svg viewBox="0 0 6 6"><path d="M1 2l2 2 2-2" fill="none" stroke="#555" stroke-width=".8" /></svg></span></div>
      <div class="sub"><label for="${g.id}-e">Escala</label>${this.spinner(`${g.id}-e`, g.scale, g.off)}</div>
      <div class="sub grow"><label for="${g.id}-i">Intervalos</label>
        <div class="line"><svg class="ic" viewBox="0 0 12 12"><path d="M0 2h12M0 6h12M0 10h12M8 0v4M3 4v4M8 8v4" stroke="#222" stroke-width="1.300" /></svg>${this.spinner(`${g.id}-i`, "5", false)}</div>
        <ul class="list">${g.values.map((v, i) => html`<li><span class="chip ${SCALE[i]}"></span>${v}</li>`)}</ul></div>
    </fieldset>`;
  }

  private arrow(d: string, label: string, one = false) {
    const w = one ? 8 : 12;
    return html`<button class=${one ? "one" : ""} aria-label=${label}><svg viewBox="0 0 ${w} 10"><path d=${d} fill="none" stroke="#222" stroke-width="2.400" /></svg></button>`;
  }

  render() {
    const s = (n: string, l: string, cls = "") => html`<button class=${cls} aria-label=${l}>${pic(LINE[n], "sm")}</button>`;
    return html`<div class="app">
      <header class="title">
        <div class="quick">
          <button class="logo" aria-label="Civil 3D">C</button>${this.b("caret", "Menu", "slot narrow")}
          ${[["file", "New"], ["open", "Open"], ["save", "Save"], ["saveas", "Save As"], ["web", "Save to web"], ["print", "Plot"], ["undo", "Undo"]].map(([n, l]) => this.b(n, l))}
          ${this.b("caret", "Undo list", "slot narrow")}${this.b("redo", "Redo", "slot narrow")}${this.b("caret", "Redo list", "slot narrow")}
          <label class="space">${pic(LINE.gear, "sm")}<select aria-label="Workspace"><option>Civil 3D</option></select>${pic(LINE.caret, "sm")}</label>
          ${this.b("caretLine", "Customize")}<button class="share">${pic(LINE.share, "sm")}Share</button>
        </div>
        <div class="name"><span>Autodesk Civil 3D 2025</span><span>rede drenagem.dwg</span></div>
        <div class="account">
          ${pic(LINE.right, "sm")}<input class="find" placeholder="Type a keyword or phrase" aria-label="Search" />
          ${this.b("search", "Search")}<button class="user">${pic(LINE.user, "sm")}gikawdm</button>
          ${this.b("caret", "Account")}${this.b("cart", "Store", "slot narrow")}${this.b("tri", "Apps")}${this.b("caret", "Apps list", "slot narrow")}<span class="bar"></span>
          ${this.b("help", "Help")}${this.b("caret", "Help list", "slot narrow")}${this.b("chat", "Chat", "slot narrow")}
          <span class="push"></span>${s("min", "Minimize", "wide")}${s("restore", "Restore", "wide")}${s("close", "Close", "slot")}
        </div>
      </header>
      <nav class="menu">
        ${MENU.map((m, i) => i < MENU.length - 1 ? html`<button>${m}</button>` : html`<div class="last"><button>${m}</button>
          <div class="doc">${s("min", "Minimize drawing")}${s("restore", "Restore drawing")}${s("close", "Close drawing")}</div></div>`)}
      </nav>
      <nav class="tabs">
        ${TABS.map((t) => html`<button class=${classMap({ on: t === "SOLIDOS" })}>${t}</button>`)}
        <button aria-label="Ribbon display">${pic(LINE.media, "sm")}${pic(LINE.caret, "sm")}</button>
      </nav>
      <div class="ribbon">${PANELS.map((p) => this.panel(p))}</div>
      <nav class="files">
        ${s("burger", "Tabs menu", "menu-btn")}
        <button class="f-start">Start</button><button class="f-draw">Drawing1*</button>
        <button class="on">rede drenagem*${pic(LINE.close, "sm")}</button><button class="f-agua">AGUA_VIS_EX_02_CIVIL*</button>${s("plus", "New drawing")}
      </nav>
      <main class="main">
        <section class="palette">
          <div class="ptitle">SOLIDOS</div>
          <div class="groups">${GROUPS.map((g) => this.group(g))}</div>
          <input class="time" type="range" min="0" max="1440" value="720" aria-label="Tempo" />
          <div class="play">
            ${this.arrow("M1.500 1v8M10 1L5 5l5 4", "Primeiro")}${this.arrow("M6 1L2 5l4 4M11 1L7 5l4 4", "Retroceder")}${this.arrow("M6.500 1L2 5l4.500 4", "Anterior", true)}
            <input class="frame" .value=${"700 / 1440"} aria-label="Quadro" />
            ${this.arrow("M1.500 1L6 5 1.500 9", "Próximo", true)}${this.arrow("M1 1l4 4-4 4M6 1l4 4-4 4", "Avançar")}${this.arrow("M2 1l5 4-5 4M10.500 1v8", "Último")}
            <button aria-label="Exportar vídeo"><svg viewBox="0 0 12 12"><path d="M1 1h7l3 3v7H1z" fill="#2b6fc9" /><path d="M1 6h10v4H1z" fill="#222" /><path d="M3 4l5-2 1 4-4 1z" fill="#e8d24a" /><path d="M2 10h9" stroke="#e0a51e" stroke-width="1.500" /></svg></button>
          </div>
        </section>
        <nav class="side">${SIDE.map((t) => html`<button class=${classMap({ on: t === "Swmm" })}>${t}</button>`)}</nav>
        <section class="work">
          <div class="view"><network-map></network-map>
            <div class="dock">${DOCK.map((d) => typeof d === "string" ? html`<span class=${d}></span>` : html`<button aria-label="Ferramenta">${pic(d)}</button>`)}</div></div>
          <div class="cmdl">
            <div class="tools"><span class="grip"></span>${s("close", "Close command line")}${s("wrench", "Customize command line")}</div>
            <div class="log">
              <div class="hist"><p>RebuildDevices INI</p><p>RebuildDevices FIMRegenerating model.</p><p>RebuildDevices INI</p><p>RebuildDevices FIMRegenerating model.</p></div>
              <div class="prompt"><svg class="sm" viewBox="0 0 12 12"><path d="M0 2h12v9H0zM2 5l2 2-2 2M5 9h4" fill="none" stroke="#777" /></svg><svg class="sm" viewBox="0 0 12 12"><path d="M3 5h6L6 8z" fill="#555" /></svg><input placeholder="Type a command" aria-label="Command" /></div>
            </div>
          </div>
        </section>
      </main>
      <footer class="status">
        <div class="left">${s("burger", "Layouts menu", "menu-btn")}<button class="on">Model</button><button class="lay">Layout1</button><button class="lay2">Layout2</button>${s("plus", "New layout")}
          <span class="tip" role="tooltip">700 / 1440</span></div>
        <div class="right">
          <span>-5.3263E+06, -1.7756E+06, 0.0000</span><button class="model">MODEL</button>
          ${s("grid", "Grid")}${s("dots", "Snap")}${s("caret", "Snap list", "c")}${s("ortho", "Ortho")}${s("polar", "Polar")}${s("caret", "Polar list", "c")}${s("iso", "Isodraft")}${s("caret", "Isodraft list", "c")}
          ${s("angle", "Tracking")}${s("osnap", "Object snap")}${s("caret", "Snap modes", "c")}${s("annot", "Annotation visibility", "lit")}${s("annot", "Auto scale")}${s("annot", "Annotation scale")}
          <button>1:1_1${pic(LINE.caret, "sm")}</button>${s("gear", "Workspace")}${s("caret", "Workspace list", "c")}${s("plus", "Monitor")}${s("shapes", "Units")}${s("globe", "Elevation")}<span>1.4</span>
          ${s("brush", "Isolate")}${s("caret", "Isolate list", "c")}${s("tag", "Properties", "lit")}${s("ring", "Performance", "ring")}${s("people", "Share")}${s("full", "Clean screen")}${s("burger", "Customization")}
        </div>
      </footer>
    </div>`;
  }
}
